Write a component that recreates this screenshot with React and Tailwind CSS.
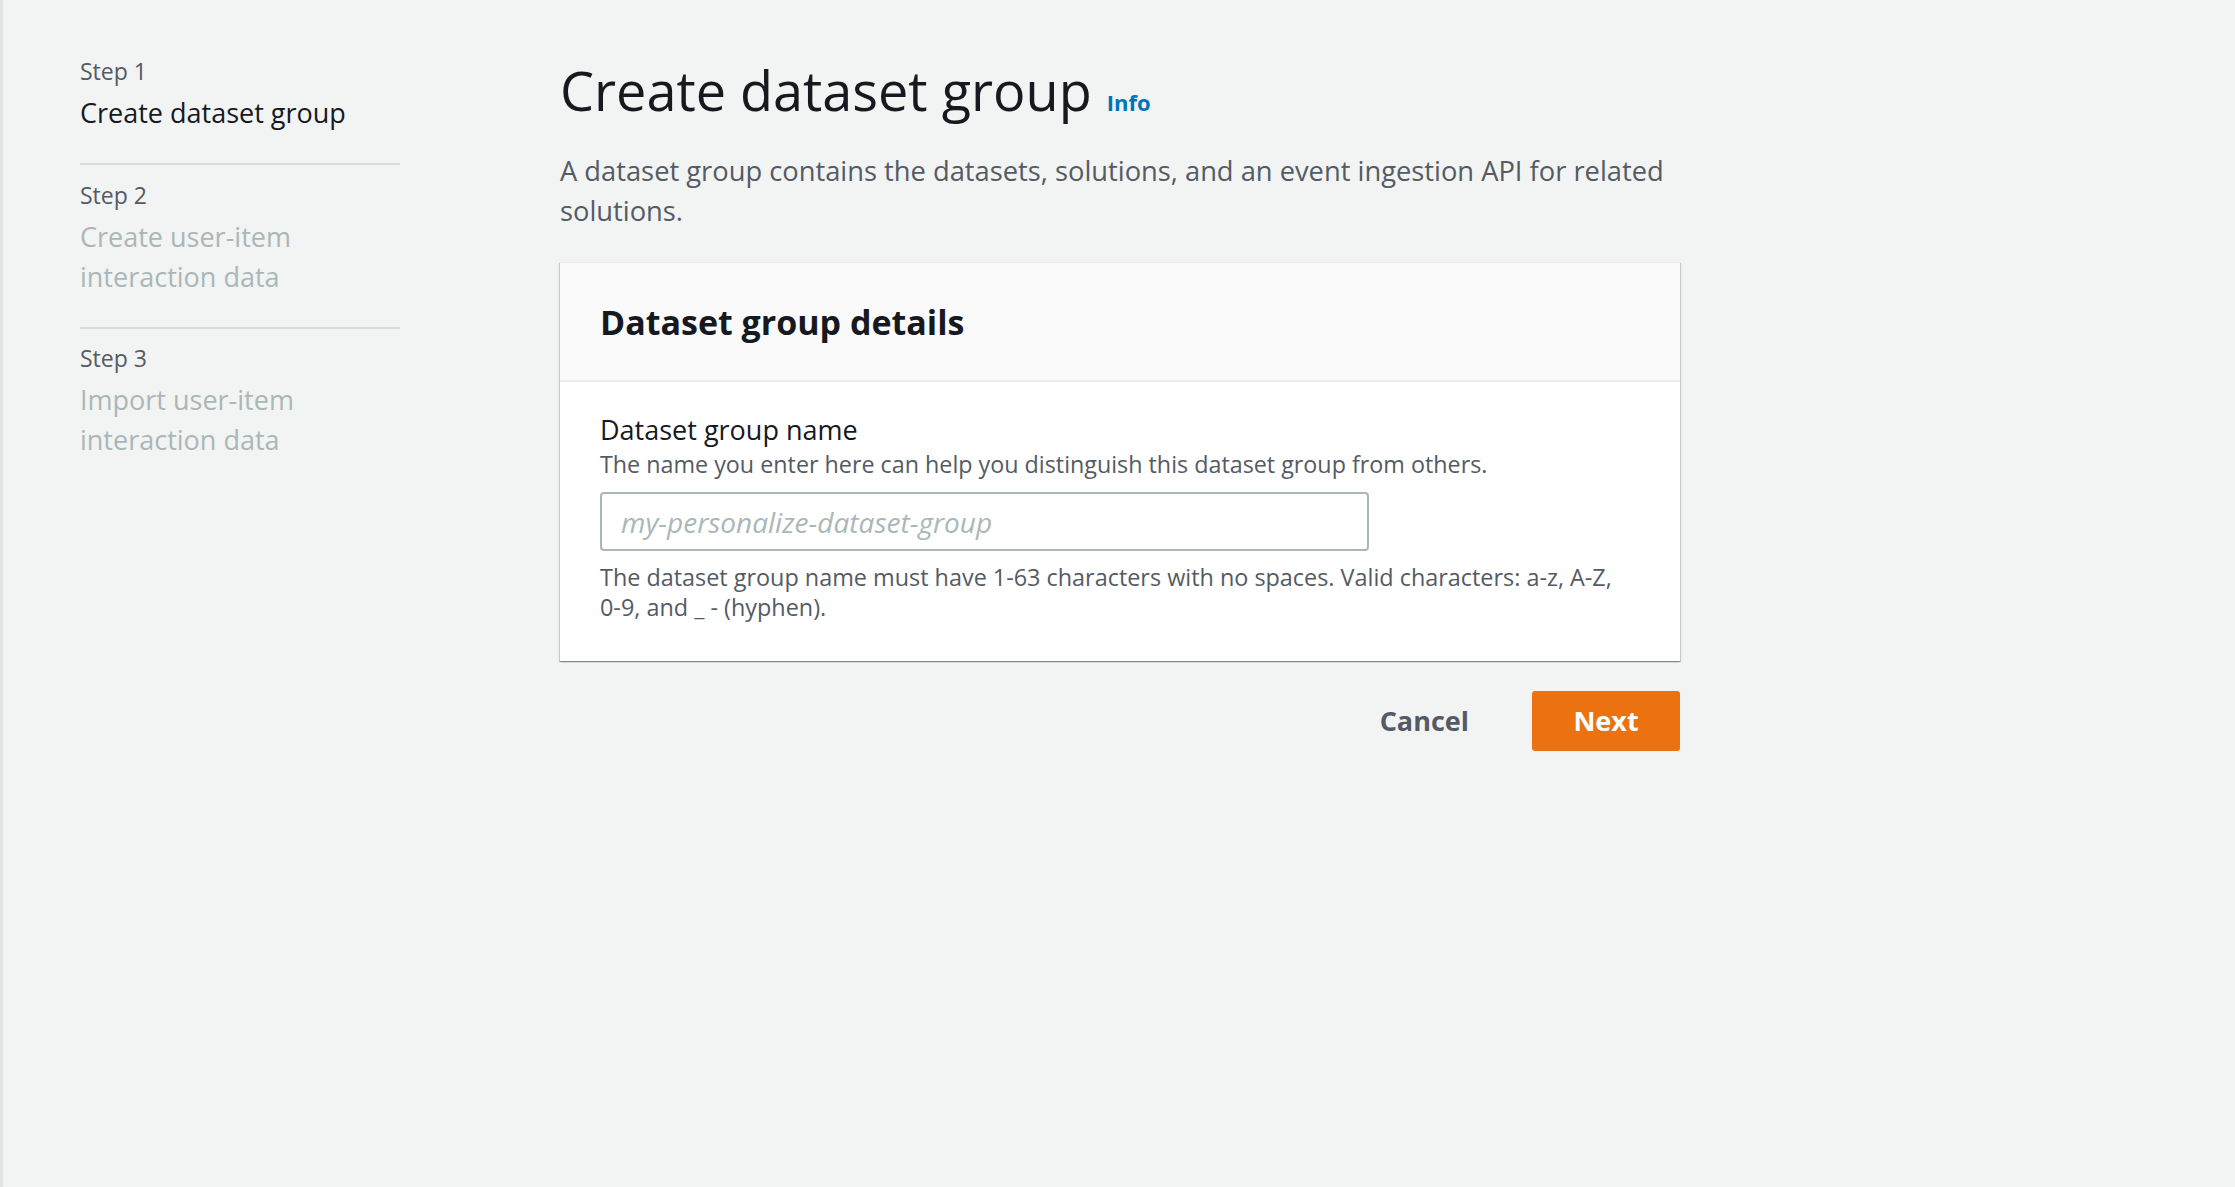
export default function App() {
  const font = { fontFamily: '"Open Sans", "Noto Sans", Arial, sans-serif' };
  return (
    <div
      className="min-h-[1187px] w-full bg-[#f2f3f3] border-l-[3px] border-[#dfe3e3] flex text-[#16191f]"
      style={font}
    >
      {/* Sidebar */}
      <nav className="w-[320px] ml-[77px] pt-[57px] shrink-0">
        <div className="pb-[30px] border-b-2 border-[#d5dbdb]">
          <div className="text-[23px] leading-[28px] text-[#545b64] mb-[8px]">Step 1</div>
          <div className="text-[27px] leading-[40px] text-[#16191f]">Create dataset group</div>
        </div>
        <div className="pt-[16px] pb-[30px] border-b-2 border-[#d5dbdb]">
          <div className="text-[23px] leading-[28px] text-[#545b64] mb-[8px]">Step 2</div>
          <div className="text-[27px] leading-[40px] text-[#aab7b8] w-[230px]">
            Create user-item interaction data
          </div>
        </div>
        <div className="pt-[15px]">
          <div className="text-[23px] leading-[28px] text-[#545b64] mb-[8px]">Step 3</div>
          <div className="text-[27px] leading-[40px] text-[#aab7b8] w-[230px]">
            Import user-item interaction data
          </div>
        </div>
      </nav>

      {/* Main */}
      <main className="ml-[160px] w-[1120px] pt-[58px] shrink-0">
        <div className="flex items-baseline">
          <h1 className="text-[54px] leading-[64px] font-normal text-[#16191f]">Create dataset group</h1>
          <a className="ml-[15px] text-[22px] font-bold text-[#0073bb]">Info</a>
        </div>
        <p className="mt-[29px] text-[27.3px] leading-[40px] text-[#545b64] w-[1118px]">
          A dataset group contains the datasets, solutions, and an event ingestion API for related solutions.
        </p>

        <section className="mt-[31px] bg-white border-t border-[#eaeded] shadow-[0_1px_1px_0_rgba(0,28,36,0.3),1px_1px_1px_0_rgba(0,28,36,0.15),-1px_1px_1px_0_rgba(0,28,36,0.15)]">
          <div className="bg-[#fafafa] border-b-2 border-[#eaeded] pl-[40px] pt-[39px] pb-[38px]">
            <h2 className="text-[34px] leading-[40px] font-bold text-[#16191f]">Dataset group details</h2>
          </div>
          <div className="pl-[40px] pr-[40px] pt-[30px] pb-[39px]">
            <div className="text-[27px] leading-[36px] text-[#16191f]">Dataset group name</div>
            <div className="text-[23.3px] leading-[32px] text-[#545b64]">
              The name you enter here can help you distinguish this dataset group from others.
            </div>
            <div className="mt-[12px] w-[769px] h-[59px] border-2 border-[#aab7b8] rounded-[4px] flex items-center pl-[19px]">
              <span className="italic text-[28px] text-[#aab7b8]">my-personalize-dataset-group</span>
            </div>
            <div className="mt-[11px] text-[23.4px] leading-[30px] text-[#545b64] w-[1030px]">
              The dataset group name must have 1-63 characters with no spaces. Valid characters: a-z, A-Z, 0-9, and _ - (hyphen).
            </div>
          </div>
        </section>

        <div className="mt-[30px] flex justify-end items-center">
          <button className="text-[27px] font-bold text-[#545b64] mr-[63px]">Cancel</button>
          <button className="h-[60px] w-[148px] bg-[#ec7211] rounded-[3px] text-[27px] font-bold text-white">
            Next
          </button>
        </div>
      </main>
    </div>
  );
}
